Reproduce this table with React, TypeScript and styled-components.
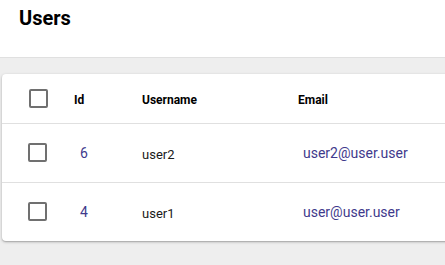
import styled, { createGlobalStyle } from "styled-components";

const GlobalStyle = createGlobalStyle`
  html, body {
    margin: 0;
    padding: 0;
    background-color: #eeeeee;
    font-family: Roboto, "Liberation Sans", sans-serif;
    overflow: hidden;
  }
`;

const Page = styled.div`
  width: 445px;
  height: 265px;
  background-color: #eeeeee;
  overflow: hidden;
`;

const Header = styled.header`
  height: 58px;
  background-color: #ffffff;
  border-bottom: 1px solid #e0e0e0;
  box-sizing: border-box;
  padding: 8px 19px;
`;

const Title = styled.h1`
  margin: 0;
  font-size: 20px;
  font-weight: 700;
  color: #000000;
  line-height: 20px;
`;

const Card = styled.div`
  margin: 16px 0 0 2px;
  width: 480px;
  background-color: #ffffff;
  border-radius: 4px;
  box-shadow: 0 1px 3px rgba(0, 0, 0, 0.25), 0 1px 1px rgba(0, 0, 0, 0.12);
  overflow: hidden;
`;

const Table = styled.table`
  width: 100%;
  border-collapse: collapse;
  table-layout: fixed;

  tbody tr:last-child {
    border-bottom: none;
  }
`;

const Row = styled.tr<{ $head?: boolean }>`
  height: ${(p) => (p.$head ? 49 : 59)}px;
  border-bottom: 1px solid #e0e0e0;
`;

const Cell = styled.td<{ $width?: number; $pad?: number }>`
  width: ${(p) => (p.$width ? `${p.$width}px` : "auto")};
  padding: 0 0 0 ${(p) => p.$pad ?? 0}px;
  vertical-align: middle;
  text-align: left;
  box-sizing: border-box;
`;

const HeadText = styled.span`
  font-size: 12px;
  font-weight: 700;
  color: #000000;
`;

const IdText = styled.span`
  font-size: 14px;
  color: #3f3a8c;
`;

const NameText = styled.span`
  font-size: 13px;
  color: #1a1a1a;
  position: relative;
  top: 1px;
`;

const EmailText = styled.span`
  font-size: 14px;
  color: #3f3a8c;
`;

const Box = styled.span`
  display: block;
  width: 19px;
  height: 19px;
  border: 2px solid #707070;
  border-radius: 2px;
  box-sizing: border-box;
`;

const users = [
  { id: 6, username: "user2", email: "user2@user.user" },
  { id: 4, username: "user1", email: "user@user.user" },
];

export default function App() {
  return (
    <Page>
      <GlobalStyle />
      <Header>
        <Title>Users</Title>
      </Header>
      <Card>
        <Table>
          <thead>
            <Row $head>
              <Cell $width={72} $pad={27}>
                <Box />
              </Cell>
              <Cell $width={68}>
                <HeadText>Id</HeadText>
              </Cell>
              <Cell $width={156}>
                <HeadText>Username</HeadText>
              </Cell>
              <Cell>
                <HeadText>Email</HeadText>
              </Cell>
            </Row>
          </thead>
          <tbody>
            {users.map((u) => (
              <Row key={u.id}>
                <Cell $pad={26}>
                  <Box />
                </Cell>
                <Cell $pad={6}>
                  <IdText>{u.id}</IdText>
                </Cell>
                <Cell>
                  <NameText>{u.username}</NameText>
                </Cell>
                <Cell $pad={5}>
                  <EmailText>{u.email}</EmailText>
                </Cell>
              </Row>
            ))}
          </tbody>
        </Table>
      </Card>
    </Page>
  );
}
